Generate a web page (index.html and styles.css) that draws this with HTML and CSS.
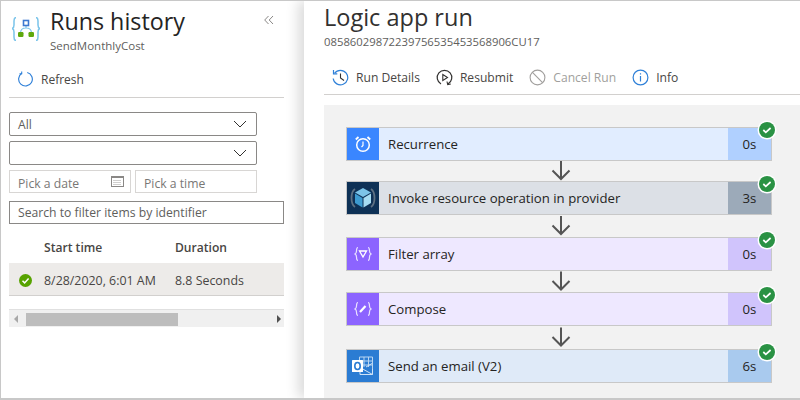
FILE: index.html
```html
<!DOCTYPE html>

<html lang="en">

<head>
  <meta charset="UTF-8" />
  <title>Logic app run</title>
  <link rel="stylesheet" href="styles.css">
</head>

<body>
  <div class="page">
    <aside class="history">
      <div class="history-head">
        <svg class="app-icon" width="28" height="24" viewBox="0 0 28 24">
          <path d="M4 0.500 C2 0.500 2 2 2 4 V8 C2 10 1.500 11 0.300 11.500 C1.500 12 2 13 2 15 V20 C2 22 2 23.500 4 23.500" fill="none" stroke="#7ac4ea" stroke-width="1.500" />
          <path d="M24 0.500 C26 0.500 26 2 26 4 V8 C26 10 26.500 11 27.700 11.500 C26.500 12 26 13 26 15 V20 C26 22 26 23.500 24 23.500" fill="none" stroke="#7ac4ea" stroke-width="1.500" />
          <path d="M14 8 V11 M8.500 16 C8.500 12.500 11 11 14 11 C17 11 19.500 12.500 19.500 16" fill="none" stroke="#7ac4ea" stroke-width="1.200" />
          <rect x="11.500" y="3.500" width="5" height="5" fill="#fff" stroke="#3c78d0" stroke-width="1.600" />
          <rect x="6" y="15" width="5.500" height="5" rx="1.200" fill="#5ea80d" />
          <rect x="16.500" y="15" width="5.500" height="5" rx="1.200" fill="#5ea80d" />
        </svg>
        <div class="history-title">
          <h1>Runs history</h1>
          <p>SendMonthlyCost</p>
        </div>
        <svg class="collapse" width="10" height="10" viewBox="0 0 10 10">
          <path d="M4.500 1 L0.700 5 L4.500 9 M9 1 L5.200 5 L9 9" fill="none" stroke="#8a8886" stroke-width="1" />
        </svg>
      </div>

      <div class="history-toolbar">
        <svg width="16" height="16" viewBox="0 0 18 18">
          <path d="M5.500 2.600 A7.700 7.700 0 1 0 11.500 1.700" fill="none" stroke="#2f80d8" stroke-width="1.300" />
          <path d="M5.300 0.500 V3 H2.800" fill="none" stroke="#2f80d8" stroke-width="1.200" />
        </svg>
        <span>Refresh</span>
      </div>

      <div class="filters">
        <div class="select">
          <span>All</span>
          <svg width="14" height="8" viewBox="0 0 14 8"><path d="M1 1 L7 7 L13 1" fill="none" stroke="#323130" stroke-width="1" /></svg>
        </div>
        <div class="select">
          <span></span>
          <svg width="14" height="8" viewBox="0 0 14 8"><path d="M1 1 L7 7 L13 1" fill="none" stroke="#323130" stroke-width="1" /></svg>
        </div>
        <div class="pickers">
          <div class="picker">
            <span>Pick a date</span>
            <svg class="picker-icon" width="13" height="12" viewBox="0 0 13 12">
              <rect x="0.500" y="1.500" width="12" height="10" fill="#fff" stroke="#8a8886" />
              <rect x="0.500" y="1" width="12" height="2" fill="#8a8886" />
              <path d="M2.500 5.500 H10.500 M2.500 7.500 H10.500 M2.500 9.500 H10.500" stroke="#a19f9d" stroke-dasharray="1 1" />
            </svg>
          </div>
          <div class="picker"><span>Pick a time</span></div>
        </div>
        <div class="search">Search to filter items by identifier</div>
      </div>

      <div class="runs">
        <div class="runs-head">
          <span class="col-time">Start time</span>
          <span>Duration</span>
        </div>
        <div class="runs-row">
          <svg class="row-check" width="13" height="13" viewBox="0 0 13 13">
            <circle cx="6.500" cy="6.500" r="6.500" fill="#57a300" />
            <path d="M3.500 6.800 L5.600 8.900 L9.600 4.500" fill="none" stroke="#fff" stroke-width="1.500" />
          </svg>
          <span class="col-time">8/28/2020, 6:01 AM</span>
          <span>8.8 Seconds</span>
        </div>
      </div>

      <div class="scrollbar">
        <i class="arrow-left"></i>
        <div class="thumb"></div>
        <i class="arrow-right"></i>
      </div>
    </aside>

    <main class="run">
      <h2>Logic app run</h2>
      <p class="run-id">08586029872239756535453568906CU17</p>

      <div class="run-toolbar">
        <div class="tool">
          <svg width="17" height="17" viewBox="0 0 17 17">
            <path d="M2.600 4.200 A7.300 7.300 0 1 1 1.200 9.500" fill="none" stroke="#2f80d8" stroke-width="1.200" />
            <path d="M1.500 1 V4.800 H5.300" fill="none" stroke="#2f80d8" stroke-width="1.200" />
            <path d="M8.500 4.500 V9 L12 11.500" fill="none" stroke="#323130" stroke-width="1.100" />
          </svg>
          <span>Run Details</span>
        </div>
        <div class="tool">
          <svg width="17" height="17" viewBox="0 0 17 17">
            <path d="M5 15 A7.300 7.300 0 1 1 12 15" fill="none" stroke="#323130" stroke-width="1.200" />
            <path d="M11 12.500 L11.700 15.600 L14.800 15" fill="none" stroke="#323130" stroke-width="1.100" />
            <path d="M6.800 5.500 L11.500 8.500 L6.800 11.500 Z" fill="none" stroke="#323130" stroke-width="1.100" />
          </svg>
          <span>Resubmit</span>
        </div>
        <div class="tool tool-off">
          <svg width="17" height="17" viewBox="0 0 17 17">
            <circle cx="8.500" cy="8.500" r="7.400" fill="none" stroke="#a19f9d" stroke-width="1.100" />
            <path d="M3.200 3.200 L13.800 13.800" stroke="#a19f9d" stroke-width="1.100" />
          </svg>
          <span>Cancel Run</span>
        </div>
        <div class="tool">
          <svg width="17" height="17" viewBox="0 0 17 17">
            <circle cx="8.500" cy="8.500" r="7.400" fill="none" stroke="#2f80d8" stroke-width="1.200" />
            <path d="M8.500 7 V12.500 M8.500 4.200 V5.600" stroke="#2f80d8" stroke-width="1.200" />
          </svg>
          <span>Info</span>
        </div>
      </div>

      <div class="canvas">
        <div class="step step-time">
          <div class="step-icon">
            <svg width="18" height="18" viewBox="0 0 18 18">
              <circle cx="9" cy="10" r="6.300" fill="none" stroke="#fff" stroke-width="1.500" />
              <path d="M9 6.500 V10.500 L7.500 12" fill="none" stroke="#fff" stroke-width="1.200" />
              <path d="M1.800 4.500 L4.500 2 M16.200 4.500 L13.500 2" stroke="#fff" stroke-width="1.800" />
            </svg>
          </div>
          <div class="step-name">Recurrence</div>
          <div class="step-time-cell">0s</div>
          <svg class="badge" width="20" height="20" viewBox="0 0 20 20">
            <circle cx="10" cy="10" r="9.500" fill="#fff" />
            <circle cx="10" cy="10" r="8" fill="#2a9244" />
            <path d="M6.300 10 L8.800 12.300 L13.600 8" fill="none" stroke="#fff" stroke-width="1.700" />
          </svg>
        </div>
        <svg class="link link-short" width="22" height="20" viewBox="0 0 22 20"><path d="M11 0 V18 M2.500 9.500 L11 18 L19.500 9.500" fill="none" stroke="#555" stroke-width="2" /></svg>

        <div class="step step-arm">
          <div class="step-icon">
            <svg width="26" height="26" viewBox="0 0 26 26">
              <path d="M5 4 C2 6 1.500 9 1.500 13 C1.500 17 2 20 5 22 M21 4 C24 6 24.500 9 24.500 13 C24.500 17 24 20 21 22" fill="none" stroke="#5f7183" stroke-width="1.800" />
              <path d="M13 3 L21 7.500 L13 12 L5 7.500 Z" fill="#7cc4e8" />
              <path d="M5 8.500 L12.500 13 V22.500 L5 18 Z" fill="#3d9bd0" />
              <path d="M21 8.500 L13.500 13 V22.500 L21 18 Z" fill="#a6dcf2" />
            </svg>
          </div>
          <div class="step-name">Invoke resource operation in provider</div>
          <div class="step-time-cell">3s</div>
          <svg class="badge" width="20" height="20" viewBox="0 0 20 20">
            <circle cx="10" cy="10" r="9.500" fill="#fff" />
            <circle cx="10" cy="10" r="8" fill="#2a9244" />
            <path d="M6.300 10 L8.800 12.300 L13.600 8" fill="none" stroke="#fff" stroke-width="1.700" />
          </svg>
        </div>
        <svg class="link link-tall" width="22" height="20" viewBox="0 0 22 20"><path d="M11 0 V18 M2.500 9.500 L11 18 L19.500 9.500" fill="none" stroke="#555" stroke-width="2" /></svg>

        <div class="step step-data">
          <div class="step-icon">
            <svg width="18" height="16" viewBox="0 0 18 16">
              <path d="M4 1.500 C2.500 1.500 2.500 3 2.500 5 C2.500 7 2 7.500 1 8 C2 8.500 2.500 9 2.500 11 C2.500 13 2.500 14.500 4 14.500 M14 1.500 C15.500 1.500 15.500 3 15.500 5 C15.500 7 16 7.500 17 8 C16 8.500 15.500 9 15.500 11 C15.500 13 15.500 14.500 14 14.500" fill="none" stroke="#e8e0ff" stroke-width="1.200" />
              <path d="M5.500 5 H12.500 L9 11 Z" fill="none" stroke="#fff" stroke-width="1.300" />
            </svg>
          </div>
          <div class="step-name">Filter array</div>
          <div class="step-time-cell">0s</div>
          <svg class="badge" width="20" height="20" viewBox="0 0 20 20">
            <circle cx="10" cy="10" r="9.500" fill="#fff" />
            <circle cx="10" cy="10" r="8" fill="#2a9244" />
            <path d="M6.300 10 L8.800 12.300 L13.600 8" fill="none" stroke="#fff" stroke-width="1.700" />
          </svg>
        </div>
        <svg class="link" width="22" height="20" viewBox="0 0 22 20"><path d="M11 0 V18 M2.500 9.500 L11 18 L19.500 9.500" fill="none" stroke="#555" stroke-width="2" /></svg>

        <div class="step step-data">
          <div class="step-icon">
            <svg width="18" height="16" viewBox="0 0 18 16">
              <path d="M4 1.500 C2.500 1.500 2.500 3 2.500 5 C2.500 7 2 7.500 1 8 C2 8.500 2.500 9 2.500 11 C2.500 13 2.500 14.500 4 14.500 M14 1.500 C15.500 1.500 15.500 3 15.500 5 C15.500 7 16 7.500 17 8 C16 8.500 15.500 9 15.500 11 C15.500 13 15.500 14.500 14 14.500" fill="none" stroke="#e8e0ff" stroke-width="1.200" />
              <path d="M6 11 L11.500 5" stroke="#fff" stroke-width="2.200" />
            </svg>
          </div>
          <div class="step-name">Compose</div>
          <div class="step-time-cell">0s</div>
          <svg class="badge" width="20" height="20" viewBox="0 0 20 20">
            <circle cx="10" cy="10" r="9.500" fill="#fff" />
            <circle cx="10" cy="10" r="8" fill="#2a9244" />
            <path d="M6.300 10 L8.800 12.300 L13.600 8" fill="none" stroke="#fff" stroke-width="1.700" />
          </svg>
        </div>
        <svg class="link link-long" width="22" height="20" viewBox="0 0 22 20"><path d="M11 0 V18 M2.500 9.500 L11 18 L19.500 9.500" fill="none" stroke="#555" stroke-width="2" /></svg>

        <div class="step step-mail">
          <div class="step-icon">
            <svg width="22" height="20" viewBox="0 0 22 20">
              <path d="M7.500 1 H20.500 V15 M7.500 1 V5 M7.500 5 H20.500 M7.500 9 H20.500 M12 1 V11 M16.500 1 V11" fill="none" stroke="#b9d6f2" stroke-width="1" />
              <path d="M8 13 V18.500 H20.500 V13 M9 12 L20.500 18.500 M14 11 L20 7.500" fill="none" stroke="#cfe3f7" stroke-width="1" />
              <rect x="0" y="4" width="11" height="12" rx="0.500" fill="#fff" />
              <ellipse cx="5.500" cy="10" rx="2.700" ry="3.500" fill="none" stroke="#2b7cd3" stroke-width="1.600" />
            </svg>
          </div>
          <div class="step-name">Send an email (V2)</div>
          <div class="step-time-cell">6s</div>
          <svg class="badge" width="20" height="20" viewBox="0 0 20 20">
            <circle cx="10" cy="10" r="9.500" fill="#fff" />
            <circle cx="10" cy="10" r="8" fill="#2a9244" />
            <path d="M6.300 10 L8.800 12.300 L13.600 8" fill="none" stroke="#fff" stroke-width="1.700" />
          </svg>
        </div>
      </div>
    </main>
  </div>
</body>

</html>
```

FILE: styles.css
```css
* {
  margin: 0;
  padding: 0;
  box-sizing: border-box;
  font-family: 'Open Sans', 'Noto Sans', sans-serif;
}

body {
  background: white;
  color: #323130;
  overflow: hidden;
}

.page {
  display: flex;
  width: 800px;
  height: 400px;
  border-top: 1px solid #c8c8c8;
  border-left: 1px solid #c8c8c8;
  border-bottom: 2px solid #c8c8c8;
  overflow: hidden;
}

/* left panel */
.history {
  width: 303px;
  flex-shrink: 0;
  padding-left: 8px;
  background: white;
}

.history-head {
  display: flex;
  width: 283px;
  height: 60px;
  margin-left: 2px;
}

.app-icon {
  margin: 16px 0 0 1px;
  flex-shrink: 0;
}

.history-title {
  flex-grow: 1;
  margin-left: 10px;
}

.history-title h1 {
  font-size: 23.300px;
  font-weight: 400;
  line-height: 30px;
  margin-top: 5px;
  color: #252423;
}

.history-title p {
  font-size: 11.500px;
  line-height: 16px;
  margin-top: 2px;
  color: #605e5c;
}

.collapse {
  margin: 14px 20px 0 0;
  flex-shrink: 0;
}

.history-toolbar {
  display: flex;
  align-items: center;
  gap: 8px;
  width: 275px;
  height: 37px;
  padding-left: 8px;
  border-bottom: 1px solid #d2d0ce;
  font-size: 12px;
  color: #484644;
}

.filters {
  display: flex;
  flex-direction: column;
  margin-top: 14px;
}

.select {
  display: flex;
  justify-content: space-between;
  align-items: center;
  width: 248px;
  height: 24px;
  margin-bottom: 5px;
  padding: 0 9px 0 8px;
  border: 1px solid #8a8886;
  border-radius: 2px;
  font-size: 12.200px;
  color: #605e5c;
}

.pickers {
  display: flex;
  gap: 4px;
  width: 248px;
}

.picker {
  display: flex;
  justify-content: space-between;
  align-items: center;
  flex: 1;
  height: 23px;
  padding: 3px 6px 0 8px;
  border: 1px solid #d8d6d4;
  font-size: 12.200px;
  color: #797775;
}

.picker-icon {
  margin-top: -5px;
}

.search {
  width: 275px;
  height: 23px;
  margin-top: 8px;
  padding-left: 8px;
  border: 1px solid #8a8886;
  font-size: 12.200px;
  line-height: 21px;
  color: #605e5c;
}

.runs {
  width: 275px;
  margin-top: 8px;
}

.runs-head {
  display: flex;
  align-items: center;
  height: 31px;
  padding-left: 35px;
  font-size: 12.100px;
  font-weight: 600;
  color: #484644;
}

.runs-row {
  display: flex;
  align-items: center;
  height: 33px;
  padding: 2px 0 0 10px;
  background: #edebe9;
  border-bottom: 1px solid #d2d0ce;
  font-size: 12.400px;
  color: #484644;
}

.row-check {
  margin-right: 12px;
}

.col-time {
  width: 131px;
}

.scrollbar {
  display: flex;
  align-items: center;
  width: 275px;
  height: 18px;
  margin-top: 13px;
  background: #f0f0f0;
  border-top: 1px solid #e0e0e0;
}

.thumb {
  width: 152px;
  height: 13px;
  margin: 1px 0 0 8px;
  background: #bdbdbd;
}

.arrow-left {
  width: 0;
  height: 0;
  margin-left: 5px;
  border: 4px solid transparent;
  border-right: 4px solid #a8a8a8;
  border-left: 0;
}

.arrow-right {
  width: 0;
  height: 0;
  margin-left: 99px;
  border: 4px solid transparent;
  border-left: 4px solid #505050;
  border-right: 0;
}

/* right panel */
.run {
  flex-grow: 1;
  padding-left: 20px;
  background: white;
  box-shadow: -6px 0 12px rgba(0, 0, 0, 0.14);
  position: relative;
}

.run h2 {
  font-size: 23.500px;
  font-weight: 400;
  line-height: 30px;
  margin-top: 1px;
  color: #323130;
}

.run-id {
  font-size: 11.300px;
  line-height: 15px;
  margin-top: 2px;
  color: #605e5c;
}

.run-toolbar {
  display: flex;
  align-items: center;
  gap: 16px;
  height: 44px;
  padding: 10px 0 0 8px;
  margin-top: 2px;
  border-bottom: 1px solid #d2d0ce;
  font-size: 12.100px;
  color: #484644;
}

.tool {
  display: flex;
  align-items: center;
  gap: 7px;
}

.tool-off {
  color: #a19f9d;
}

.canvas {
  display: flex;
  flex-direction: column;
  width: 476px;
  height: 293px;
  margin-top: 10px;
  padding: 22px 0 0 22px;
  background: #f2f2f2;
}

.step {
  display: flex;
  align-items: stretch;
  flex-shrink: 0;
  width: 426px;
  height: 34px;
  border: 1px solid #c8c8c8;
  font-size: 13.200px;
  color: #252423;
  position: relative;
}

.step-icon {
  display: flex;
  justify-content: center;
  align-items: center;
  width: 32px;
  flex-shrink: 0;
}

.step-name {
  display: flex;
  align-items: center;
  flex-grow: 1;
  padding-left: 9px;
}

.step-time-cell {
  display: flex;
  justify-content: center;
  align-items: center;
  width: 43px;
  flex-shrink: 0;
}

.badge {
  position: absolute;
  top: -8px;
  right: -6px;
}

.step-time { background: #e1edff; }
.step-time .step-icon { background: #3a86ff; }
.step-time .step-time-cell { background: #b0d0ff; }

.step-arm { background: #dce0e6; }
.step-arm .step-icon { background: #0e3156; }
.step-arm .step-time-cell { background: #9caab9; }

.step-data { background: #eee8ff; }
.step-data .step-icon { background: #8c64ff; }
.step-data .step-time-cell { background: #d0c4fc; }

.step-mail { background: #dfeaf8; }
.step-mail .step-icon { background: #2b7cd3; }
.step-mail .step-time-cell { background: #a9caee; }

.link {
  flex-shrink: 0;
  align-self: center;
  height: 21px;
  margin-right: 24px;
}

.link-short { height: 20px; }
.link-tall { height: 22px; }
.link-long { height: 23px; }
```
